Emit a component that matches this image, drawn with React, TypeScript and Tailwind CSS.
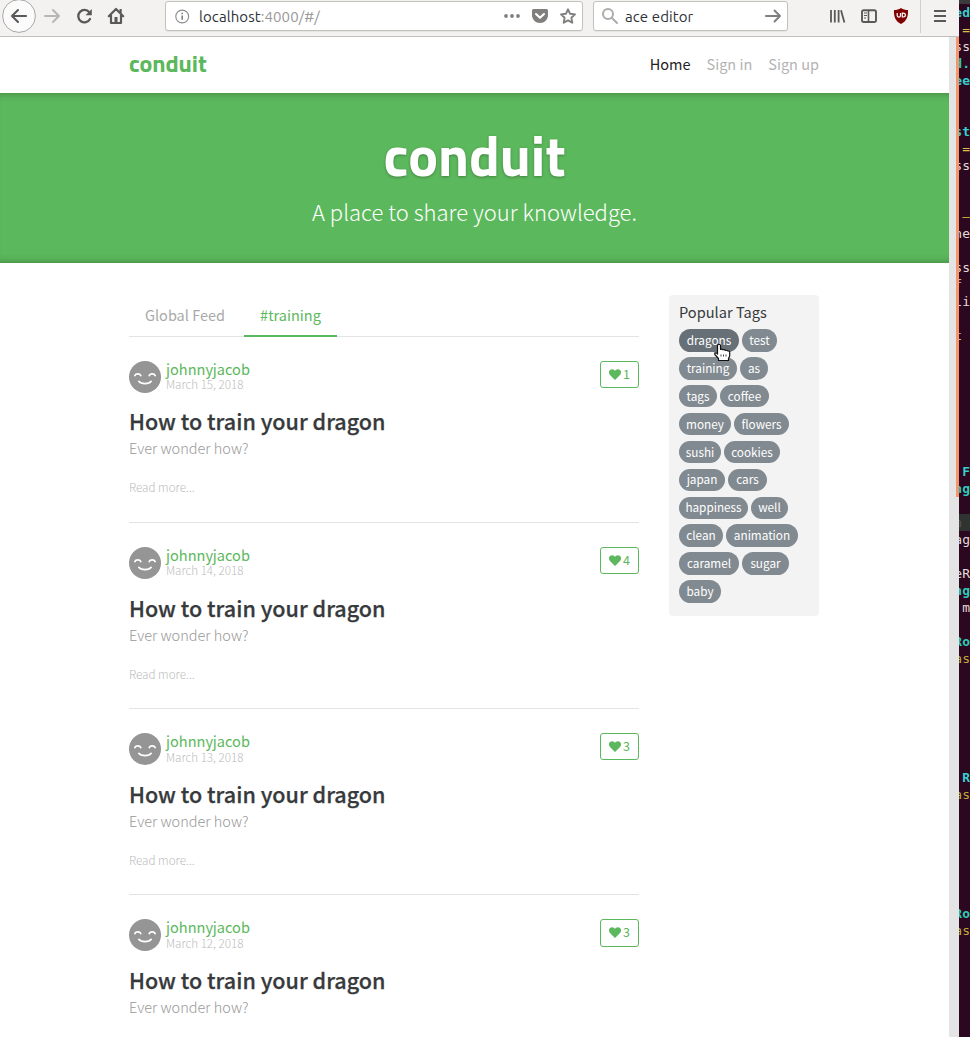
import React from "react";

const sans = "font-['Noto_Sans_CJK_SC','Source_Sans_Pro',sans-serif]";

type Line = [string, string?];

const terminal: Record<number, Line> = {
  0: ["ed", "text-[#35d0cf] font-bold"],
  1: [" =", "text-[#d9c14a]"],
  2: ["ss", "text-[#e0dcd8]"],
  3: ["d.", "text-[#35c5ad] font-bold"],
  4: ["ee", "text-[#35d0cf] font-bold"],
  7: ["st", "text-[#35d0cf] font-bold"],
  8: [" =", "text-[#d9c14a]"],
  9: ["ss", "text-[#e0dcd8]"],
  12: [" –", "text-[#c9b23c]"],
  13: ["ne", "text-[#e0dcd8]"],
  15: ["ss", "text-[#e0dcd8]"],
  16: ["f ", "text-[#e0b9a0]"],
  17: ["li", "text-[#e0dcd8]"],
  19: ["t ", "text-[#e0b9a0]"],
  27: [" F", "text-[#35d0cf] font-bold"],
  28: ["ng", "text-[#2fc9b8] font-bold"],
  30: ["a ", "text-[#555] bg-[#2f3432]"],
  31: ["ag", "text-[#e0dcd8]"],
  33: ["eR", "text-[#e0dcd8]"],
  34: ["ng", "text-[#2fc9b8] font-bold"],
  35: [" m", "text-[#e0dcd8]"],
  37: ["Ro", "text-[#2fc9b8] font-bold"],
  38: ["as", "text-[#bda93a]"],
  45: [" R", "text-[#35d0cf] font-bold"],
  46: ["as", "text-[#bda93a]"],
  53: ["Ro", "text-[#2fc9b8] font-bold"],
  54: ["as", "text-[#bda93a]"],
};

function Terminal() {
  return (
    <aside className="flex h-[1037px] w-[11px] shrink-0 flex-col overflow-hidden border-t-4 border-[#3d3a3c] bg-[#2c0720]">
      {Array.from({ length: 60 }, (_, i) => (
        <div key={i} className="flex h-[17px] w-[11px] shrink-0 justify-end overflow-hidden whitespace-pre font-['DejaVu_Sans_Mono',monospace] text-[13px] leading-[17px]">
          {terminal[i] && <span className={terminal[i][1]}>{terminal[i][0]}</span>}
        </div>
      ))}
    </aside>
  );
}

function Toolbar() {
  return (
    <header className="flex h-[37px] items-start border-b border-[#c2c0bd] bg-[#f3f2f1] font-['Ubuntu','Noto_Sans',sans-serif] text-[15px] text-[#2d3138]">
      <svg className="block h-[36px] w-[165px] shrink-0" viewBox="0 0 165 36" fill="none">
        <circle cx="19" cy="16" r="16.4" fill="#fbfbfb" stroke="#a9a7a5" />
        <g strokeWidth="2.1" strokeLinecap="round" strokeLinejoin="round">
          <path d="M26 16H12M18 10l-6 6 6 6" stroke="#5a5958" />
          <path d="M45 16h14M53 10l6 6-6 6" stroke="#b8b7b6" />
          <path d="M89.3 12.2A6.2 6.2 0 1 0 90 19" stroke="#5a5958" strokeWidth="2.3" />
        </g>
        <path d="M91.8 9v6.3h-6.3z" fill="#5a5958" />
        <path d="M108.8 16.2 116 9l7.2 7.2M111 15v8h10v-8" stroke="#5a5958" strokeWidth="2.2" strokeLinecap="round" strokeLinejoin="round" />
        <path d="M119.5 9h2.2v4h-2.2zM114.5 17h3v6h-3z" fill="#5a5958" />
      </svg>
      <div className="mt-px flex h-[30px] w-[418px] shrink-0 items-center rounded-[3px] border border-[#c3c1be] bg-white shadow-[0_1px_1px_rgba(0,0,0,0.06)]">
        <svg className="ml-[9px] size-[15px] shrink-0" viewBox="0 0 15 15" fill="none">
          <circle cx="7.2" cy="7.5" r="6.4" stroke="#8a8988" strokeWidth="1.1" />
          <path d="M7.2 6.5v4.3M7.2 3.8v1.4" stroke="#777" strokeWidth="1.5" />
        </svg>
        <span className="ml-[9px] w-[305px] shrink-0 pt-[2px] whitespace-nowrap tracking-[0.08px]">localhost<span className="text-[#999]">:4000/#/</span></span>
        <svg className="h-[28px] w-[78px] shrink-0" viewBox="504 2 78 28">
          <g fill="#807f7e"><circle cx="506" cy="16" r="1.9" /><circle cx="512" cy="16" r="1.9" /><circle cx="518" cy="16" r="1.9" /></g>
          <path d="M533.5 9h13q1.5 0 1.5 1.5V15c0 4.5-3.6 8-8 8s-8-3.500-8-8v-4.500Q532 9 533.500 9z" fill="#807f7e" />
          <path d="m536 14 4 3.800 4-3.800" fill="none" stroke="#fff" strokeWidth="2.100" strokeLinecap="round" strokeLinejoin="round" />
          <path d="m568 9.300 2.100 4.500 4.900.600-3.600 3.400.9 4.900-4.300-2.400-4.300 2.400.9-4.900-3.600-3.400 4.900-.600z" fill="none" stroke="#807f7e" strokeWidth="1.900" strokeLinejoin="round" />
        </svg>
      </div>
      <div className="mt-px ml-[10px] flex h-[30px] w-[195px] shrink-0 items-center rounded-[3px] border border-[#c3c1be] bg-white shadow-[0_1px_1px_rgba(0,0,0,0.06)]">
        <svg className="ml-[7px] size-[18px] shrink-0" viewBox="0 0 18 18" fill="none" stroke="#adacab" strokeWidth="2" strokeLinecap="round">
          <circle cx="7" cy="7" r="5" /><path d="m11 11 5 5" />
        </svg>
        <span className="ml-[6px] w-[140px] pt-[2px] whitespace-nowrap tracking-[0.1px]">ace editor</span>
        <svg className="size-[16px] shrink-0" viewBox="0 0 16 16" fill="none" stroke="#807f7e" strokeWidth="1.900" strokeLinecap="round" strokeLinejoin="round">
          <path d="M.8 8H15M9.500 2.500 15 8l-5.500 5.500" />
        </svg>
      </div>
      <svg className="ml-auto block h-[36px] w-[139px] shrink-0" viewBox="820 0 139 36" fill="none">
        <path d="M831 10v12.500M834.800 10v12.500M838.600 10v12.500M841 10.300l3.400 12.200" stroke="#5a5958" strokeWidth="1.800" />
        <rect x="862" y="10.300" width="14" height="11.700" rx="1.800" stroke="#5a5958" strokeWidth="1.900" />
        <path d="M868.500 10v12" stroke="#5a5958" strokeWidth="1.600" />
        <path d="M864 13h3M864 15.500h3M864 18h2" stroke="#5a5958" />
        <path d="M901 8c2 1.500 4.500 2 7 2 .3 6-1 11-7 14-6-3-7.300-8-7-14 2.500 0 5-.5 7-2z" fill="#800000" />
        <path d="M897.200 13v2.600q0 1.500 1.600 1.500t1.700-1.500V13M902.300 13.200V17h.8q2.300 0 2.300-1.900t-2.300-1.900z" stroke="#fff" strokeWidth="1.200" />
        <path d="M920.500 0v33" stroke="#d2d0ce" />
        <path d="M934 11h12M934 16h12M934 21h12" stroke="#5a5958" strokeWidth="2" />
      </svg>
    </header>
  );
}

function Article({ date, likes }: { date: string; likes: number }) {
  return (
    <article className="h-[186.200px] border-t border-[#e4e4e4] pt-[24px]">
      <div className="flex h-[32px] items-start">
        <svg className="size-[32px] shrink-0" viewBox="0 0 32 32" fill="none">
          <circle cx="16" cy="16" r="16" fill="#959595" />
          <path d="M5.800 14.600c1-2.200 5-2.200 6 0M20.200 14.600c1-2.200 5-2.200 6 0M9.800 20.300c2.300 3 10.100 3 12.400 0" stroke="#fff" strokeWidth="1.700" strokeLinecap="round" />
        </svg>
        <div className="-mt-px ml-[5px] flex flex-col whitespace-nowrap">
          <span className="h-[18.600px] text-[14.550px] leading-[17px] text-[#5cb85c]">johnnyjacob</span>
          <span className="h-[13px] text-[11.600px] leading-[13px] font-light text-[#bbb]">{date}</span>
        </div>
        <div className="ml-auto flex h-[27.400px] w-[39px] items-center justify-center gap-[2px] rounded-[3px] border border-[#5cb85c] text-[12.500px] text-[#5cb85c]">
          <svg className="h-[11px] w-[12px]" viewBox="0 0 12 11" fill="#5cb85c"><path d="M6 11 1 6C-1.200 3.600.3.300 3.100.3 4.500.3 5.500 1.200 6 2 6.500 1.200 7.500.3 8.900.3c2.800 0 4.300 3.300 2.100 5.700z" /></svg>
          <span>{likes}</span>
        </div>
      </div>
      <h1 className="mt-[15.800px] h-[26px] text-[21.550px] leading-[26px] font-medium whitespace-nowrap text-[#373a3c] [-webkit-text-stroke:0.250px_#373a3c]">How to train your dragon</h1>
      <p className="h-[27px] text-[14.500px] leading-[27px] font-light text-[#999]">Ever wonder how?</p>
      <p className="mt-[16px] h-[20px] text-[11.700px] leading-[20px] font-light text-[#bbb]">Read more...</p>
    </article>
  );
}

const tagRows = [
  ["dragons:60", "test:35"], ["training:58", "as:28"], ["tags:38", "coffee:49"], ["money:52", "flowers:55"],
  ["sushi:42", "cookies:56"], ["japan:46", "cars:39"], ["happiness:69", "well:37"], ["clean:44", "animation:72"],
  ["caramel:60", "sugar:47"], ["baby:42"],
];

function Tags() {
  return (
    <aside className="mt-[32px] h-[321px] w-[150px] shrink-0 rounded-[4px] bg-[#f3f3f3] pt-[6px] pl-[10px]">
      <p className="h-[22px] text-[14.600px] leading-[22px] text-[#373a3c]">Popular Tags</p>
      <div className="mt-[6.200px] flex flex-col">
        {tagRows.map((row) => (
          <div key={row[0]} className="flex h-[27.900px] gap-[3px]">
            {row.map((item) => {
              const [name, width] = item.split(":");
              return (
                <span key={name} style={{ width: `${width}px` }} className={`relative flex h-[22.500px] items-center justify-center rounded-full pb-[2px] text-[11.750px] leading-[17px] whitespace-nowrap text-white ${name === "dragons" ? "bg-[#687077]" : "bg-[#818a91]"}`}>
                  {name}
                  {name === "dragons" && (
                    <svg className="absolute top-[14px] left-[34px] z-10 h-[19px] w-[18px]" viewBox="0 0 18 19" fill="#fff" stroke="#111" strokeWidth="1.200" strokeLinejoin="round">
                      <path d="M5 1.500h1.500q1 0 1 1v4q1-.700 2.500.3 1.500-.6 2.500.5 1.500-.2 2.500.7 1.700-.2 1.700 1.500v3.500l-1.200 2.500v2H5.500v-2L1.800 11.500V9.800h1.700L4.500 11V2.500z" />
                      <path d="M8 11.500v2M10.500 11.500v2M13 11.500v2" strokeWidth=".8" />
                    </svg>
                  )}
                </span>
              );
            })}
          </div>
        ))}
      </div>
    </aside>
  );
}

export default function App() {
  return (
    <div className="flex h-[1037px] w-[970px] overflow-hidden bg-white">
      <div className="flex w-[959px] shrink-0 flex-col">
        <Toolbar />
        <div className="flex h-[1000px]">
          <div className={`w-[949px] overflow-hidden bg-white ${sans}`}>
            <nav className="flex h-[56px] items-center px-[129px] pb-[2px] text-[14.500px] text-[#b3b3b3]">
              <span className="mr-auto pb-[2px] font-['Titillium_Web','Noto_Sans',sans-serif] text-[24px] leading-[32px] font-bold tracking-[-0.050px] text-[#5cb85c]">conduit</span>
              <div className="mr-[1px] flex gap-[16px] whitespace-nowrap">
                <span className="text-[#222]">Home</span><span>Sign in</span><span>Sign up</span>
              </div>
            </nav>
            <section className="flex h-[170px] flex-col items-center bg-[#5cb85c] pt-[32px] text-white shadow-[inset_0_8px_8px_-8px_rgba(0,0,0,0.300),inset_0_-8px_8px_-8px_rgba(0,0,0,0.300)]">
              <h1 className="h-[62px] font-['Titillium_Web','Noto_Sans',sans-serif] text-[56px] leading-[62px] font-bold [text-shadow:0_1px_3px_rgba(0,0,0,0.300)]">conduit</h1>
              <p className="mt-[6px] h-[36px] text-[22px] leading-[36px] font-light whitespace-nowrap">A place to share your knowledge.</p>
            </section>
            <main className="flex items-start gap-[30px] pl-[129px]">
              <div className="w-[510px] shrink-0 pt-[32px]">
                <div className="flex h-[42px] text-[14.500px] whitespace-nowrap shadow-[inset_0_-1px_0_#ddd]">
                  <span className="flex w-[115px] justify-center pr-[3px] leading-[40px] text-[#aaa]">Global Feed</span>
                  <span className="flex w-[93px] justify-center border-b-2 border-[#5cb85c] leading-[40px] text-[#5cb85c]">#training</span>
                </div>
                <div className="-mt-[1.400px]">
                  <Article date="March 15, 2018" likes={1} />
                  <Article date="March 14, 2018" likes={4} />
                  <Article date="March 13, 2018" likes={3} />
                  <Article date="March 12, 2018" likes={3} />
                </div>
              </div>
              <Tags />
            </main>
          </div>
          <div className="flex w-[10px] justify-end bg-[#e4e4e4]">
            <div className="h-[460px] w-[3px] bg-[#f3956d]" />
          </div>
        </div>
      </div>
      <Terminal />
    </div>
  );
}
